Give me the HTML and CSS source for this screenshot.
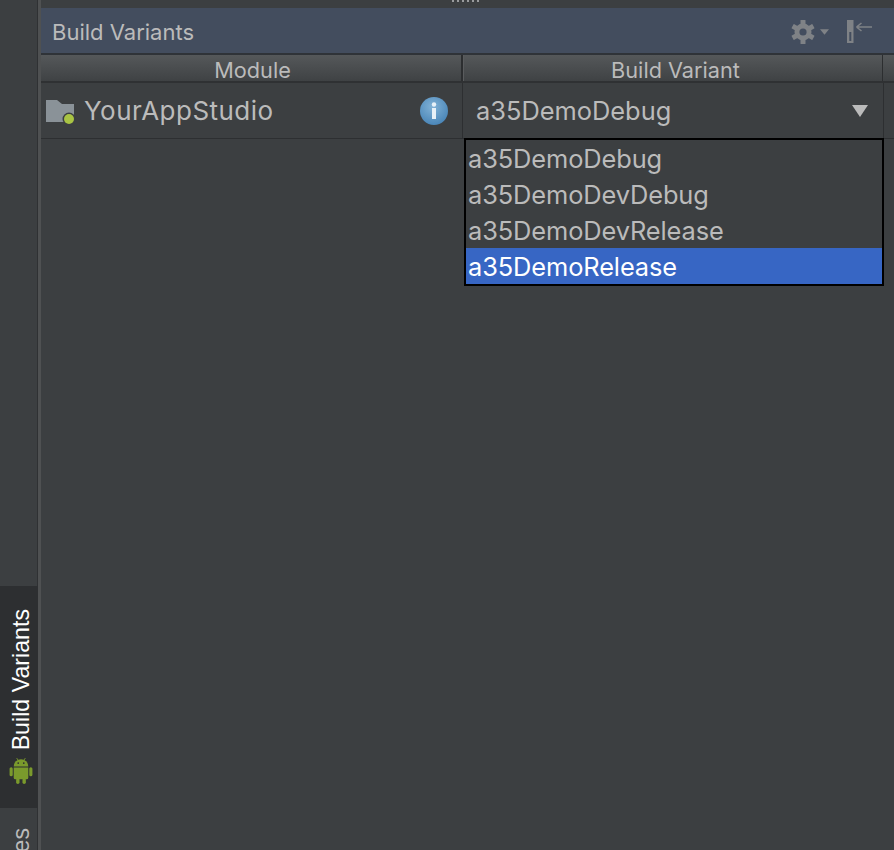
FILE: index.html
```html
<!DOCTYPE html>
<html lang="en">
<head>
<meta charset="utf-8">
<title>Build Variants</title>
<link rel="stylesheet" href="styles.css">
</head>
<body>
<div class="app">
  <aside class="strip">
    <div class="tool-btn active">
      <span class="tool-label">Build Variants</span>
      <svg class="android" width="24" height="26" viewBox="2.6 1.6 18.8 21.4"><g fill="#7a9a2c"><path d="M6 8.600h12a6 6 0 0 0-12 0z"/><path d="M6 9.400h12v8.400a1.300 1.300 0 0 1-1.300 1.300H7.300A1.300 1.300 0 0 1 6 17.800z"/><rect x="2.600" y="9.200" width="2.600" height="7.400" rx="1.300"/><rect x="18.800" y="9.200" width="2.600" height="7.400" rx="1.300"/><rect x="8" y="18" width="2.800" height="5" rx="1.400"/><rect x="13.200" y="18" width="2.800" height="5" rx="1.400"/><path d="M8.400 1.600l1.400 2.200M15.600 1.600l-1.400 2.200" stroke="#7a9a2c" stroke-width=".7"/></g><circle cx="9.700" cy="5.800" r=".7" fill="#2b2d2f"/><circle cx="14.300" cy="5.800" r=".7" fill="#2b2d2f"/></svg>
    </div>
    <div class="tool-btn next"><span class="tool-label dim">Favorites</span></div>
  </aside>
  <main class="panel">
    <div class="grip"><div class="dots"></div></div>
    <header class="titlebar">
      <span class="title">Build Variants</span>
      <div class="actions">
        <svg width="24" height="24" viewBox="0 0 24 24"><g fill="#7f8286"><circle cx="12" cy="12" r="8.500"/><rect x="9.500" y="0" width="5" height="24" rx=".6"/><rect x="9.500" y="0" width="5" height="24" rx=".6" transform="rotate(60 12 12)"/><rect x="9.500" y="0" width="5" height="24" rx=".6" transform="rotate(120 12 12)"/></g><circle cx="12" cy="12" r="3.600" fill="#434d5e"/></svg>
        <svg class="caret" width="9" height="6" viewBox="0 0 10 6"><path d="M0 0h10L5 6z" fill="#7f8286"/></svg>
        <svg class="hide" width="25" height="23" viewBox="0 0 25 23"><path d="M0 0h6.500v23H0zM2.300 12v9h2v-9z" fill="#7f8286" fill-rule="evenodd"/><path d="M9.500 7H25M9.500 7l5-4M9.500 7l5 4" stroke="#7f8286" stroke-width="1.600" fill="none"/></svg>
      </div>
    </header>
    <div class="table-head">
      <div class="th th-module">Module</div>
      <div class="th th-variant">Build Variant</div>
    </div>
    <div class="row">
      <div class="cell-module">
        <svg class="folder" width="30" height="24" viewBox="0 0 30 24"><path d="M0 0h11l5 4h12v18H0z" fill="#8a9298"/><circle cx="23" cy="19" r="6.500" fill="#3c3f41"/><circle cx="23" cy="19" r="5" fill="#a9c444"/></svg>
        <span class="module-name">YourAppStudio</span>
        <svg class="info" width="28" height="28" viewBox="0 0 28 28"><defs><radialGradient id="ig" cx=".45" cy=".35" r=".7"><stop offset="0" stop-color="#82b2d6"/><stop offset="1" stop-color="#4683b6"/></radialGradient></defs><circle cx="14" cy="14" r="14" fill="url(#ig)"/><circle cx="14" cy="7.500" r="2.200" fill="#e8f1f8"/><rect x="12" y="11" width="4" height="11" fill="#e8f1f8"/></svg>
      </div>
      <div class="cell-variant">
        <span>a35DemoDebug</span>
        <svg width="16" height="12" viewBox="0 0 16 12"><path d="M0 0h16L8 12z" fill="#bbb"/></svg>
      </div>
    </div>
    <div class="body-fill"></div>
    <ul class="popup">
      <li>a35DemoDebug</li>
      <li>a35DemoDevDebug</li>
      <li>a35DemoDevRelease</li>
      <li class="selected">a35DemoRelease</li>
    </ul>
  </main>
</div>
</body>
</html>
```
FILE: styles.css
```css
* { box-sizing: border-box; }
html, body { margin: 0; height: 100%; overflow: hidden; }
body { font-family: Inter, "Liberation Sans", sans-serif; background: #3c3f41; color: #bbb; }
.app { display: flex; height: 850px; width: 894px; }
.strip { width: 41px; flex: none; border-right: 3px solid #4f5152; display: flex; flex-direction: column; justify-content: flex-end; overflow: hidden; box-shadow: inset -1px 0 0 #2f3133; }
.tool-btn { display: flex; flex-direction: column; align-items: center; flex: none; width: 38px; }
.tool-btn.active { background: #2d2f31; color: #fff; height: 222px; justify-content: flex-end; padding: 0 0 24px 3px; gap: 8px; }
.tool-btn.next { height: 42px; padding: 20px 0 0 3px; }
.tool-label { writing-mode: vertical-rl; transform: rotate(180deg); font-family: "Liberation Sans", sans-serif; font-size: 23.2px; line-height: 24px; white-space: nowrap; flex: none; }
.tool-label.dim { color: #bbb; }
.panel { flex: 1; min-width: 0; position: relative; display: flex; flex-direction: column; }
.grip { height: 8px; flex: none; display: flex; justify-content: center; }
.dots { width: 28px; height: 2px; margin-right: 4px; background: repeating-linear-gradient(90deg, #9a9c9e 0 2px, transparent 2px 5px); }
.titlebar { height: 47px; flex: none; background: #434d5e; border-bottom: 2px solid #2f3338; display: flex; align-items: center; justify-content: space-between; padding: 2px 22px 0 11px; }
.title { font-size: 22px; color: #bbb; }
.actions { display: flex; align-items: center; }
.caret { margin-left: 5px; }
.hide { margin-left: 18px; }
.table-head { height: 28px; flex: none; display: flex; background: linear-gradient(#55585a, #3f4244); border-bottom: 2px solid #2f3133; padding-right: 11px; font-size: 21.7px; }
.th { text-align: center; line-height: 28px; padding-top: 1px; color: #bbb; }
.th-module { width: 422px; padding-left: 3px; border-right: 2px solid #2c2e30; }
.th-variant { flex: 1; padding-left: 5px; border-left: 1px solid #5a5c5e; border-right: 1px solid #2c2e30; }
.row { height: 56px; flex: none; display: flex; border-bottom: 1px solid #2d2f31; }
.cell-module { width: 422px; display: flex; align-items: center; padding: 0 0 0 5px; border-right: 1px solid #2d2f31; }
.folder { margin-top: 2px; }
.module-name { font-size: 26px; letter-spacing: .46px; margin-left: 8px; flex: 1; }
.info { margin-right: 14px; }
.cell-variant { flex: 1; margin-right: 10px; display: flex; align-items: center; justify-content: space-between; padding: 0 15px 0 13px; font-size: 25.4px; border-right: 1px solid #2d2f31; }
.body-fill { flex: 1; }
.popup { position: absolute; left: 423px; top: 138px; width: 420px; margin: 0; padding: 0; list-style: none; border: 2px solid #000; background: #3c3f41; font-size: 25.4px; letter-spacing: -.1px; }
.popup li { height: 36px; line-height: 38px; padding-left: 2px; }
.popup li.selected { background: #3766c4; color: #fff; }
```
